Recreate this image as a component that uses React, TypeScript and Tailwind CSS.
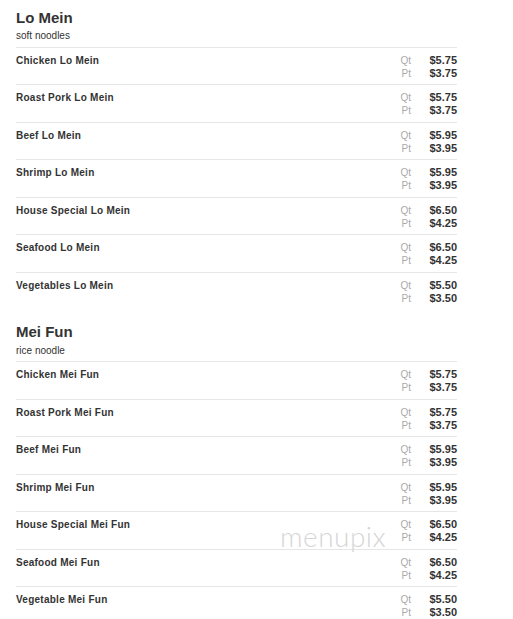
import React from "react";

type Item = { name: string; qt: string; pt: string };

const sections: { title: string; note: string; items: Item[] }[] = [
  {
    title: "Lo Mein",
    note: "soft noodles",
    items: [
      { name: "Chicken Lo Mein", qt: "$5.75", pt: "$3.75" },
      { name: "Roast Pork Lo Mein", qt: "$5.75", pt: "$3.75" },
      { name: "Beef Lo Mein", qt: "$5.95", pt: "$3.95" },
      { name: "Shrimp Lo Mein", qt: "$5.95", pt: "$3.95" },
      { name: "House Special Lo Mein", qt: "$6.50", pt: "$4.25" },
      { name: "Seafood Lo Mein", qt: "$6.50", pt: "$4.25" },
      { name: "Vegetables Lo Mein", qt: "$5.50", pt: "$3.50" },
    ],
  },
  {
    title: "Mei Fun",
    note: "rice noodle",
    items: [
      { name: "Chicken Mei Fun", qt: "$5.75", pt: "$3.75" },
      { name: "Roast Pork Mei Fun", qt: "$5.75", pt: "$3.75" },
      { name: "Beef Mei Fun", qt: "$5.95", pt: "$3.95" },
      { name: "Shrimp Mei Fun", qt: "$5.95", pt: "$3.95" },
      { name: "House Special Mei Fun", qt: "$6.50", pt: "$4.25" },
      { name: "Seafood Mei Fun", qt: "$6.50", pt: "$4.25" },
      { name: "Vegetable Mei Fun", qt: "$5.50", pt: "$3.50" },
    ],
  },
];

function Row({ item }: { item: Item }) {
  return (
    <div className="flex items-start justify-between border-t border-[#e6e6e6] pt-[6px] pb-[4.5px]">
      <p className="text-[10px] leading-[13px] font-bold tracking-[0.25px] text-[#333]">
        {item.name}
      </p>
      <div className="flex">
        <div className="w-[29px] text-[10px] leading-[13px] text-[#aaa]">
          <p>Qt</p>
          <p className="pl-[1px]">Pt</p>
        </div>
        <div className="text-[11px] leading-[13px] font-bold text-[#333] text-right">
          <p>{item.qt}</p>
          <p>{item.pt}</p>
        </div>
      </div>
    </div>
  );
}

export default function App() {
  return (
    <div className="relative min-h-[619px] bg-white pt-[8.5px] pl-4 font-['Liberation_Sans',Arial,sans-serif]">
      <div className="w-[441px]">
        {sections.map((s, i) => (
          <section key={s.title} className={i > 0 ? "mt-[14px]" : ""}>
            <h2 className="text-[15px] leading-[18px] font-bold text-[#333]">{s.title}</h2>
            <p className="mt-[3.5px] mb-[4.5px] text-[10px] leading-[12px] text-[#333]">{s.note}</p>
            {s.items.map((it) => (
              <Row key={it.name} item={it} />
            ))}
          </section>
        ))}
      </div>

      {/* watermark */}
      <div className="absolute left-[280px] top-[520px] text-[28px] leading-[32px] font-light tracking-[0.5px] text-[#d6d6d6] font-['Lato',sans-serif]">
        menupix
      </div>
    </div>
  );
}
